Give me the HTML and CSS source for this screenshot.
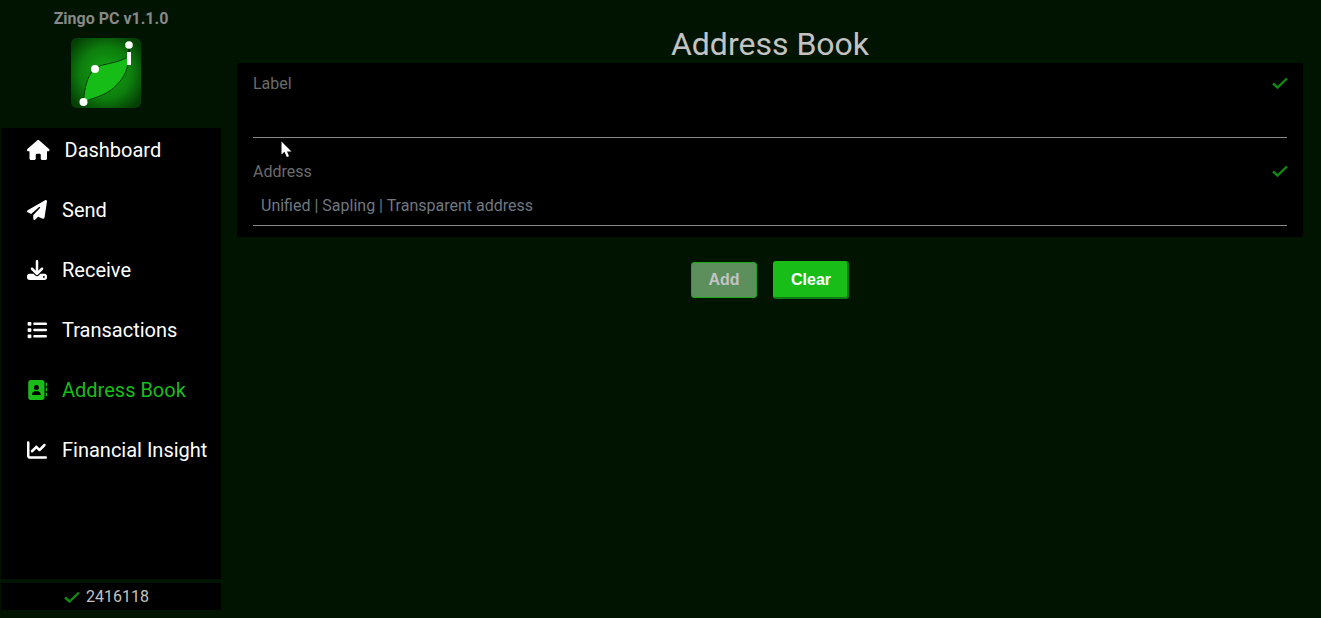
FILE: index.html
```html
<!DOCTYPE html>
<html lang="en">
<head>
<meta charset="utf-8">
<title>Zingo PC</title>
<link rel="stylesheet" href="styles.css">
</head>
<body>
<div class="app">
  <aside class="sidebar">
    <div class="version">Zingo PC v1.1.0</div>
    <svg class="logo" viewBox="0 0 70 70" aria-hidden="true">
      <defs>
        <radialGradient id="logoBg" cx="50%" cy="50%" r="62%">
          <stop offset="0" stop-color="#12a812"/>
          <stop offset="0.6" stop-color="#0d7d0d"/>
          <stop offset="1" stop-color="#043f04"/>
        </radialGradient>
      </defs>
      <rect width="70" height="70" rx="6" fill="url(#logoBg)"/>
      <path d="M12.500 64 C13.500 50 16 38 24 30 C33 25 45 26 57 19 C58 34 50 44 40 52 C32 58 22 60 12.500 64 Z" fill="#16bd16" stroke="#063d06" stroke-width="1"/>
      <path d="M58 7 V20" stroke="#031f03" stroke-width="1.500"/>
      <rect x="56" y="14" width="4" height="13" fill="#fff"/>
      <circle cx="58" cy="7" r="3.800" fill="#fff"/>
      <circle cx="24" cy="31" r="4" fill="#fff"/>
      <circle cx="12.500" cy="64" r="4" fill="#fff"/>
    </svg>
    <nav class="nav">
      <a class="nav-item">
        <svg class="icon icon-wide" viewBox="0 0 576 512"><path d="M575.8 255.5c0 18-15 32.1-32 32.1h-32l.7 160.2c0 2.7-.2 5.4-.5 8.1V472c0 22.1-17.9 40-40 40H456c-1.1 0-2.2 0-3.3-.1c-1.4 .1-2.8 .1-4.2 .1H416 392c-22.1 0-40-17.9-40-40V448 384c0-17.7-14.3-32-32-32H256c-17.7 0-32 14.3-32 32v64 24c0 22.1-17.9 40-40 40H160 128.1c-1.5 0-3-.1-4.5-.2c-1.2 .1-2.4 .2-3.6 .2H104c-22.1 0-40-17.9-40-40V360c0-.9 0-1.9 .1-2.8V287.6H32c-18 0-32-14-32-32.1c0-9 3-17 10-24L266.4 8c7-7 15-8 22-8s15 2 21 7L564.8 231.5c8 7 12 15 11 24z"/></svg>
        <span>Dashboard</span>
      </a>
      <a class="nav-item">
        <svg class="icon" viewBox="0 0 512 512"><path d="M498.1 5.6c10.1 7 15.4 19.1 13.5 31.2l-64 416c-1.5 9.7-7.4 18.2-16 23s-18.9 5.4-28 1.6L284 427.7l-68.5 74.1c-8.9 9.7-22.9 12.9-35.2 8.1S160 493.2 160 480V396.4c0-4 1.5-7.8 4.2-10.7L331.8 202.8c5.8-6.3 5.6-16-.4-22s-15.7-6.4-22-.7L106 360.8 17.7 316.6C7.1 311.3 .3 300.7 0 288.9s5.9-22.8 16.1-28.7l448-256c10.7-6.1 23.9-5.5 34 1.4z"/></svg>
        <span>Send</span>
      </a>
      <a class="nav-item">
        <svg class="icon" viewBox="0 0 512 512"><path d="M288 32c0-17.7-14.3-32-32-32s-32 14.3-32 32V274.7l-73.4-73.4c-12.5-12.5-32.8-12.5-45.3 0s-12.5 32.8 0 45.3l128 128c12.5 12.5 32.8 12.5 45.3 0l128-128c12.5-12.5 12.5-32.8 0-45.3s-32.8-12.5-45.3 0L288 274.7V32zM64 352c-35.3 0-64 28.7-64 64v32c0 35.3 28.7 64 64 64H448c35.3 0 64-28.7 64-64V416c0-35.3-28.7-64-64-64H346.5l-45.3 45.3c-25 25-65.5 25-90.5 0L165.5 352H64zm368 56a24 24 0 1 1 0 48 24 24 0 1 1 0-48z"/></svg>
        <span>Receive</span>
      </a>
      <a class="nav-item">
        <svg class="icon" viewBox="0 0 512 512"><path d="M40 48C26.700 48 16 58.700 16 72v48c0 13.300 10.700 24 24 24H88c13.300 0 24-10.700 24-24V72c0-13.300-10.700-24-24-24H40zM192 64c-17.700 0-32 14.300-32 32s14.300 32 32 32H480c17.700 0 32-14.300 32-32s-14.300-32-32-32H192zm0 160c-17.700 0-32 14.300-32 32s14.300 32 32 32H480c17.700 0 32-14.300 32-32s-14.300-32-32-32H192zm0 160c-17.700 0-32 14.300-32 32s14.300 32 32 32H480c17.700 0 32-14.300 32-32s-14.300-32-32-32H192zM16 232v48c0 13.300 10.700 24 24 24H88c13.300 0 24-10.700 24-24V232c0-13.300-10.700-24-24-24H40c-13.300 0-24 10.700-24 24zM40 368c-13.300 0-24 10.700-24 24v48c0 13.300 10.700 24 24 24H88c13.300 0 24-10.700 24-24V392c0-13.300-10.700-24-24-24H40z"/></svg>
        <span>Transactions</span>
      </a>
      <a class="nav-item nav-item-active">
        <svg class="icon" viewBox="0 0 512 512"><path d="M96 0C60.700 0 32 28.700 32 64V448c0 35.300 28.700 64 64 64H384c35.300 0 64-28.700 64-64V64c0-35.300-28.700-64-64-64H96zM208 288h64c44.200 0 80 35.800 80 80c0 8.800-7.200 16-16 16H144c-8.800 0-16-7.200-16-16c0-44.200 35.800-80 80-80zm-32-96a64 64 0 1 1 128 0 64 64 0 1 1 -128 0zM512 80c0-8.800-7.200-16-16-16s-16 7.200-16 16v64c0 8.800 7.200 16 16 16s16-7.200 16-16V80zM496 192c-8.800 0-16 7.200-16 16v64c0 8.800 7.200 16 16 16s16-7.200 16-16V208c0-8.800-7.200-16-16-16zm16 144c0-8.800-7.200-16-16-16s-16 7.200-16 16v64c0 8.800 7.200 16 16 16s16-7.200 16-16V336z"/></svg>
        <span>Address Book</span>
      </a>
      <a class="nav-item">
        <svg class="icon" viewBox="0 0 512 512"><path d="M64 64c0-17.700-14.300-32-32-32S0 46.300 0 64V400c0 44.200 35.800 80 80 80H480c17.700 0 32-14.300 32-32s-14.300-32-32-32H80c-8.800 0-16-7.200-16-16V64zm406.600 86.600c12.500-12.500 12.500-32.800 0-45.300s-32.800-12.500-45.300 0L320 210.700l-57.400-57.400c-12.500-12.500-32.800-12.500-45.300 0l-112 112c-12.500 12.500-12.500 32.800 0 45.300s32.800 12.500 45.300 0L240 221.300l57.400 57.400c12.500 12.500 32.800 12.500 45.300 0l128-128z"/></svg>
        <span>Financial Insight</span>
      </a>
    </nav>
    <div class="status">
      <svg class="check" viewBox="0 0 16 12"><path d="M1 6.500 L5.500 10.500 L15 1.500"/></svg>
      <span>2416118</span>
    </div>
  </aside>
  <main class="main">
    <h1 class="title">Address Book</h1>
    <section class="form">
      <div class="field">
        <div class="field-head">
          <span class="field-label">Label</span>
          <svg class="check check-field" viewBox="0 0 16 12"><path d="M1 6.500 L5.500 10.500 L15 1.500"/></svg>
        </div>
        <div class="field-input"></div>
      </div>
      <div class="field">
        <div class="field-head">
          <span class="field-label">Address</span>
          <svg class="check check-field" viewBox="0 0 16 12"><path d="M1 6.500 L5.500 10.500 L15 1.500"/></svg>
        </div>
        <div class="field-input">Unified | Sapling | Transparent address</div>
      </div>
    </section>
    <div class="actions">
      <button class="btn btn-disabled" type="button">Add</button>
      <button class="btn btn-primary" type="button">Clear</button>
    </div>
  </main>
</div>
<svg class="cursor" viewBox="0 0 12 17" aria-hidden="true"><path d="M0.500 0.500 V13.500 L3.500 10.800 L5.800 16 L8 15.200 L6 10.500 H10.500 Z" fill="#fff"/></svg>
</body>
</html>
```
FILE: styles.css
```css
* { box-sizing: border-box; }
html, body { margin: 0; height: 100%; overflow: hidden; }
body {
  background: #011401;
  font-family: Roboto, "Liberation Sans", sans-serif;
  color: #fff;
}
.app { display: flex; height: 618px; }
.sidebar {
  width: 237px;
  flex: none;
  display: flex;
  flex-direction: column;
  align-items: center;
  padding: 10px 16px 8px 1px;
}
.version {
  font-size: 16px;
  font-weight: 700;
  line-height: 18px;
  color: #888;
  margin-bottom: 10px;
}
.logo { width: 70px; height: 70px; display: block; margin: 0 10px 20px 0; flex: none; }
.nav {
  align-self: stretch;
  flex: 1;
  background: #000;
  display: flex;
  flex-direction: column;
  gap: 16px;
  padding-left: 26px;
  margin-bottom: 4px;
}
.nav-item {
  height: 44px;
  display: flex;
  align-items: center;
  gap: 15px;
  font-size: 20px;
  color: #fff;
  white-space: nowrap;
}
.nav-item-active { color: #18bd18; }
.icon { width: 20px; height: 20px; fill: currentColor; flex: none; display: block; }
.icon-wide { width: 22.500px; }
.status {
  align-self: stretch;
  height: 27px;
  flex: none;
  background: #000;
  display: flex;
  align-items: center;
  justify-content: center;
  gap: 6px;
  padding-right: 9px;
  font-size: 16px;
  color: #c3c3c3;
}
.check { width: 16px; height: 12px; display: block; flex: none; fill: none; stroke: #118a11; stroke-width: 2.400; }
.check-field { margin-right: -1px; }
.main { flex: 1; padding-right: 18px; display: flex; flex-direction: column; }
.title {
  margin: 0;
  height: 63px;
  padding-top: 25px;
  text-align: center;
  font-size: 32px;
  font-weight: 400;
  line-height: 38px;
  color: #c3c3c3;
}
.form {
  background: #000;
  padding: 1px 16px 0;
  flex: none;
  height: 174px;
}
.field { height: 88px; }
.field-head {
  display: flex;
  justify-content: space-between;
  align-items: center;
  height: 38px;
}
.field-label { font-size: 16px; color: #6b6b6b; }
.field-input {
  height: 36px;
  border-bottom: 1px solid #8a8a8a;
  padding: 4px 8px 0;
  font-size: 16px;
  line-height: 24px;
  color: #6f7880;
}
.actions { display: flex; justify-content: center; align-items: center; gap: 16px; margin-top: 24px; }
.btn {
  font-family: "Liberation Sans", Arial, sans-serif;
  font-size: 16px;
  font-weight: 700;
  border-radius: 3px;
  padding: 0;
}
.btn-disabled {
  width: 66px;
  height: 36px;
  background: #5d8f5d;
  border: 1px solid #18a818;
  color: #c3c3c3;
}
.btn-primary {
  width: 76px;
  height: 38px;
  background: #18bd18;
  border: 0;
  border-right: 2px solid #0f7d0f;
  border-bottom: 2px solid #0f7d0f;
  padding: 2px 0 0 2px;
  color: #fff;
}
.cursor { position: absolute; left: 281px; top: 141px; width: 12px; height: 17px; }
```
